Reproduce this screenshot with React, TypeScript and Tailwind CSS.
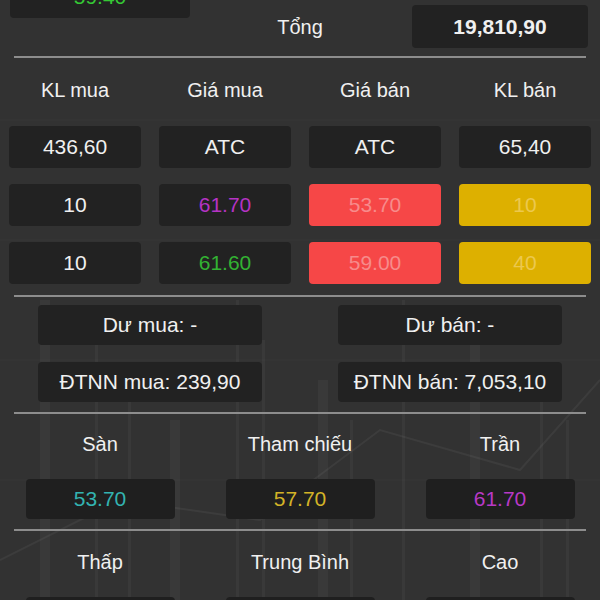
import React from 'react'

const font = { fontFamily: '"Liberation Sans", Arial, sans-serif' }

type Cell = { text: string; text_cls?: string; box_cls?: string }

const orderRows: Cell[][] = [
  [
    { text: '436,60' },
    { text: 'ATC' },
    { text: 'ATC' },
    { text: '65,40' },
  ],
  [
    { text: '10' },
    { text: '61.70', text_cls: 'text-[#b533c4]' },
    { text: '53.70', text_cls: 'text-[#f78b8b]', box_cls: 'bg-[#f64747]' },
    { text: '10', text_cls: 'text-[#ecc84e]', box_cls: 'bg-[#ddb000]' },
  ],
  [
    { text: '10' },
    { text: '61.60', text_cls: 'text-[#33b233]' },
    { text: '59.00', text_cls: 'text-[#f78b8b]', box_cls: 'bg-[#f64747]' },
    { text: '40', text_cls: 'text-[#ecc84e]', box_cls: 'bg-[#ddb000]' },
  ],
]

function Divider() {
  return <div className="mx-[14px] h-[2px] bg-[#8d8d8d]" />
}

function Background() {
  // faint candle chart behind the panel
  const bars = [40, 95, 128, 170, 236, 262, 318, 350, 402, 470, 540, 566]
  return (
    <svg className="absolute inset-0 h-full w-full" viewBox="0 0 600 600" preserveAspectRatio="none">
      {bars.map((x, i) => (
        <rect key={x} x={x} y={300 + (i % 4) * 40} width={i % 3 === 0 ? 10 : 3} height={300} fill="#ffffff" opacity="0.035" />
      ))}
      <path d="M0 560 L120 500 L260 520 L380 430 L520 470 L600 380" stroke="#ffffff" strokeOpacity="0.05" strokeWidth="2" fill="none" />
      <path d="M0 120 L600 120 M0 240 L600 240 M0 360 L600 360 M0 480 L600 480" stroke="#ffffff" strokeOpacity="0.025" strokeWidth="1" />
    </svg>
  )
}

export default function App() {
  return (
    <div className="relative h-[600px] w-[600px] overflow-hidden bg-[#323232] text-[#f0f0f0]" style={font}>
      <Background />
      <div className="relative">
        {/* Tong */}
        <div className="grid h-[56px] grid-cols-3">
          <div className="flex justify-center">
            <div className="mt-[-25px] flex h-[43px] w-[180px] items-center justify-center rounded bg-[#222222] text-[21px] text-[#35c835]">
              59.40
            </div>
          </div>
          <div className="flex items-center justify-center pb-[2px] text-[20px]">Tổng</div>
          <div className="flex justify-center">
            <div className="mt-[5px] flex h-[43px] w-[176px] items-center justify-center rounded bg-[#222222] text-[21px] font-bold">
              19,810,90
            </div>
          </div>
        </div>
        <Divider />

        {/* Order book */}
        <div className="grid h-[64px] grid-cols-4 items-center text-center text-[20px]">
          <div>KL mua</div>
          <div>Giá mua</div>
          <div>Giá bán</div>
          <div>KL bán</div>
        </div>
        <div className="mt-[4px] flex flex-col gap-[16px]">
          {orderRows.map((row, r) => (
            <div key={r} className="grid grid-cols-4">
              {row.map((c, i) => (
                <div key={i} className="flex justify-center">
                  <div
                    className={`flex h-[42px] w-[132px] items-center justify-center rounded text-[21px] ${c.box_cls ?? 'bg-[#222222]'} ${c.text_cls ?? 'text-[#f0f0f0]'}`}
                  >
                    {c.text}
                  </div>
                </div>
              ))}
            </div>
          ))}
        </div>
        <div className="mt-[11px]">
          <Divider />
        </div>

        {/* Du / DTNN */}
        <div className="mt-[8px] flex flex-col gap-[17px] text-[21px]">
          <div className="grid grid-cols-2">
            <div className="flex justify-center">
              <div className="flex h-[40px] w-[224px] items-center justify-center rounded bg-[#222222]">Dư mua: -</div>
            </div>
            <div className="flex justify-center">
              <div className="flex h-[40px] w-[224px] items-center justify-center rounded bg-[#222222]">Dư bán: -</div>
            </div>
          </div>
          <div className="grid grid-cols-2">
            <div className="flex justify-center">
              <div className="flex h-[40px] w-[224px] items-center justify-center rounded bg-[#222222]">ĐTNN mua: 239,90</div>
            </div>
            <div className="flex justify-center">
              <div className="flex h-[40px] w-[224px] items-center justify-center rounded bg-[#222222]">ĐTNN bán: 7,053,10</div>
            </div>
          </div>
        </div>
        <div className="mt-[10px]">
          <Divider />
        </div>

        {/* San / Tham chieu / Tran */}
        <div className="grid h-[60px] grid-cols-3 items-center text-center text-[20px]">
          <div>Sàn</div>
          <div>Tham chiếu</div>
          <div>Trần</div>
        </div>
        <div className="mt-[5px] grid grid-cols-3 text-[21px]">
          <div className="flex justify-center">
            <div className="flex h-[40px] w-[149px] items-center justify-center rounded bg-[#1f1f1f] text-[#33b3b1]">53.70</div>
          </div>
          <div className="flex justify-center">
            <div className="flex h-[40px] w-[149px] items-center justify-center rounded bg-[#1f1f1f] text-[#d3b327]">57.70</div>
          </div>
          <div className="flex justify-center">
            <div className="flex h-[40px] w-[149px] items-center justify-center rounded bg-[#1f1f1f] text-[#b839c6]">61.70</div>
          </div>
        </div>
        <div className="mt-[10px]">
          <Divider />
        </div>

        {/* Thap / Trung binh / Cao */}
        <div className="grid h-[62px] grid-cols-3 items-center text-center text-[20px]">
          <div>Thấp</div>
          <div>Trung Bình</div>
          <div>Cao</div>
        </div>
        <div className="mt-[4px] grid grid-cols-3">
          <div className="flex justify-center">
            <div className="h-[40px] w-[149px] rounded bg-[#1f1f1f]" />
          </div>
          <div className="flex justify-center">
            <div className="h-[40px] w-[149px] rounded bg-[#1f1f1f]" />
          </div>
          <div className="flex justify-center">
            <div className="h-[40px] w-[149px] rounded bg-[#1f1f1f]" />
          </div>
        </div>
      </div>
    </div>
  )
}
